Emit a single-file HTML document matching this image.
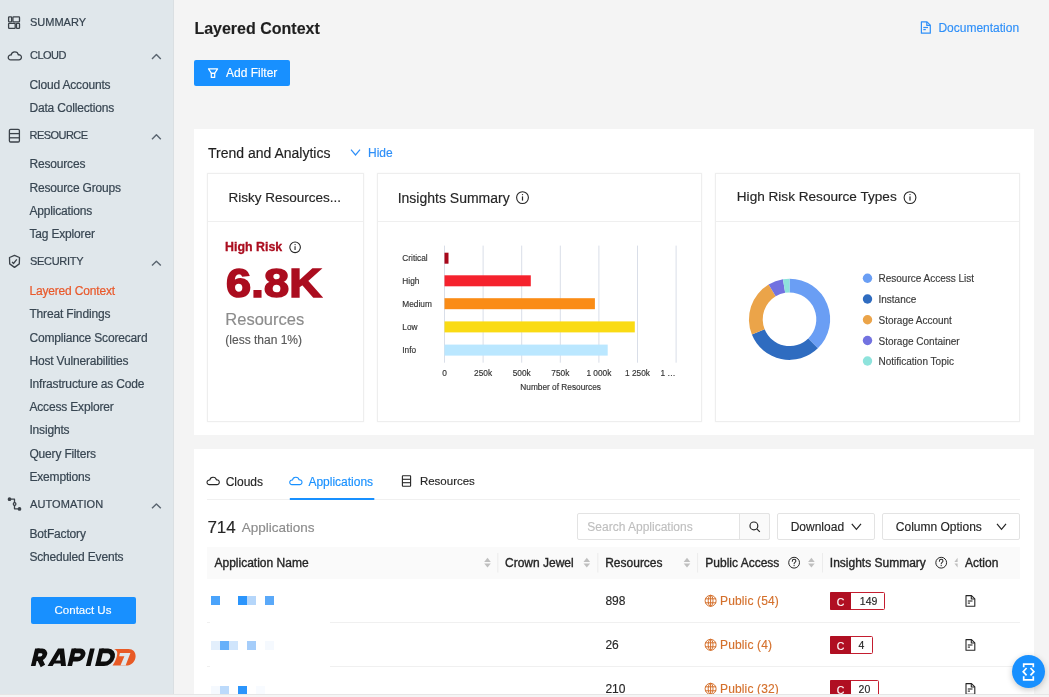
<!DOCTYPE html>
<html><head><meta charset="utf-8">
<style>
*{margin:0;padding:0;box-sizing:border-box}
html,body{width:1049px;height:697px;overflow:hidden;background:#f4f4f4;-webkit-font-smoothing:antialiased;font-family:"Liberation Sans",sans-serif;position:relative}
.a{position:absolute;white-space:nowrap}
.t{position:absolute;white-space:nowrap;line-height:1;-webkit-text-stroke:0.15px currentColor}
#side{position:absolute;left:0;top:0;width:174px;height:697px;background:#e0e7eb;border-right:1px solid #dadfe2}
#side .h{font-size:11px;color:#36434f;left:30px;-webkit-text-stroke:0.2px #36434f}
#side .i{font-size:12px;letter-spacing:-0.17px;color:#384652;left:29.4px;-webkit-text-stroke:0.2px #384652}
#side .act{color:#e9592b;-webkit-text-stroke:0.2px #e9592b}
svg{position:absolute;overflow:visible}
.card{position:absolute;background:#fff}
.ic{position:absolute;background:#fff;border:1px solid #eeeeee;box-shadow:0 0 1.5px rgba(0,0,0,0.06)}
.ich{position:absolute;left:0;right:0;top:0;height:48px;border-bottom:1px solid #efefef}
.hd{font-size:12px;color:#262626;-webkit-text-stroke:0.35px #262626}
.rw{font-size:12px;color:#262626}
.pub{font-size:12px;color:#d4702c;letter-spacing:0.15px}
.cb{font-size:10.5px;color:#fff;text-align:center}
.cn{font-size:10.5px;color:#262626}
</style></head>
<body><div style="position:absolute;left:0;top:0;width:1049px;height:697px;will-change:transform">
<div id="side">
  <!-- SUMMARY icon -->
  <svg style="left:0;top:0" width="174" height="697" viewBox="0 0 174 697">
    <g fill="none" stroke="#3b4249" stroke-width="1.3" stroke-linejoin="round">
      <rect x="8.6" y="16.9" width="3" height="5" rx="0.6"/>
      <rect x="12.9" y="16.9" width="6.6" height="5" rx="0.6"/>
      <rect x="8.6" y="23.3" width="6.6" height="5" rx="0.6"/>
      <rect x="16.5" y="23.3" width="3" height="5" rx="0.6"/>
      <!-- cloud -->
      <path d="M10.68 59.91 L18.88 59.91 A2.59 2.59 0 1 0 18.36 54.78 A3.67 3.67 0 0 0 11.16 54.99 A2.48 2.48 0 1 0 10.68 59.91 Z"/>
      <!-- resource -->
      <rect x="9.4" y="129.4" width="10" height="12.6" rx="1.2"/>
      <line x1="9.4" y1="133.6" x2="19.4" y2="133.6"/>
      <line x1="9.4" y1="137.8" x2="19.4" y2="137.8"/>
      <!-- shield -->
      <path d="M14.5 255.4 L19.5 257.5 L19.3 263.9 L14.5 267.4 L9.7 263.9 L9.5 257.5 Z"/>
      <path d="M12.1 261.9 L13.5 263.5 L16.8 259.3"/>
      <!-- automation -->
      <path d="M10.5 499.2 H14.5 V503 M14.5 505 V508.8 H18.5"/>
      <circle cx="14.6" cy="504" r="1.3"/>
      <circle cx="9.5" cy="499.2" r="1.2" fill="#3b4249"/>
      <circle cx="19.5" cy="508.9" r="1.2" fill="#3b4249"/>
      <!-- chevrons -->
      <path d="M152 59 L156.4 54.6 L160.8 59" stroke="#5a6570" stroke-width="1.4"/>
      <path d="M152 139.2 L156.4 134.8 L160.8 139.2" stroke="#5a6570" stroke-width="1.4"/>
      <path d="M152 265.6 L156.4 261.2 L160.8 265.6" stroke="#5a6570" stroke-width="1.4"/>
      <path d="M152 508.3 L156.4 503.9 L160.8 508.3" stroke="#5a6570" stroke-width="1.4"/>
    </g>
  </svg>
  <div class="t h" style="top:16.9px">SUMMARY</div>
  <div class="t h" style="top:49.7px;letter-spacing:-0.5px">CLOUD</div>
  <div class="t i" style="top:78.8px">Cloud Accounts</div>
  <div class="t i" style="top:102.0px">Data Collections</div>
  <div class="t h" style="top:129.9px;letter-spacing:-0.55px;left:29.6px">RESOURCE</div>
  <div class="t i" style="top:158.4px">Resources</div>
  <div class="t i" style="top:181.6px">Resource Groups</div>
  <div class="t i" style="top:204.8px">Applications</div>
  <div class="t i" style="top:228.0px">Tag Explorer</div>
  <div class="t h" style="top:256px;letter-spacing:-0.3px">SECURITY</div>
  <div class="t i act" style="top:285.1px">Layered Context</div>
  <div class="t i" style="top:308.4px">Threat Findings</div>
  <div class="t i" style="top:331.6px">Compliance Scorecard</div>
  <div class="t i" style="top:354.8px">Host Vulnerabilities</div>
  <div class="t i" style="top:378.0px">Infrastructure as Code</div>
  <div class="t i" style="top:401.2px">Access Explorer</div>
  <div class="t i" style="top:424.4px">Insights</div>
  <div class="t i" style="top:447.6px">Query Filters</div>
  <div class="t i" style="top:470.8px">Exemptions</div>
  <div class="t h" style="top:499.4px;letter-spacing:0.1px">AUTOMATION</div>
  <div class="t i" style="top:528.0px">BotFactory</div>
  <div class="t i" style="top:550.7px">Scheduled Events</div>
  <div class="a" style="left:30.5px;top:597.4px;width:105px;height:26.5px;background:#1890ff;border-radius:2px"></div>
  <div class="t" style="left:30.5px;width:105px;text-align:center;top:605px;font-size:11.5px;color:#fff">Contact Us</div>
  <!-- logo -->
  <svg style="left:0;top:0" width="174" height="697">
    <g transform="translate(0,666.0) skewX(-13.6) translate(0,-666.0)" fill="none" stroke="#0d0d0d" stroke-width="4.6" stroke-linecap="butt"><path d="M33.20 666.0 V648.6"/><path d="M33.20 650.90 H38.10 A3.90 3.90 0 0 1 38.10 658.70 H33.20"/><path d="M37.60 658.70 L42.90 666.0"/><path stroke="none" fill="#0d0d0d" d="M47.60 666.0 L53.80 648.6 L59.80 648.6 L66.00 666.0 L61.00 666.0 L56.80 654.10 L52.60 666.0 Z"/><path stroke="none" fill="#0d0d0d" d="M50.80 660.40 L62.80 660.40 L63.80 663.40 L49.80 663.40 Z"/><path d="M69.70 666.0 V648.6"/><path d="M69.70 650.90 H76.20 A4.1 4.1 0 0 1 76.20 659.10 H69.70"/><path d="M88.20 666.0 V648.6"/><path d="M97.40 666.0 V648.6"/><path d="M97.40 650.90 H104.00 A6.40 6.40 0 0 1 104.00 663.70 H97.40"/></g>
    <path fill-rule="evenodd" fill="#e85a25" d="M114 648.9 L128.5 648.9 C133 648.9 135.8 652 135.6 656.5 C135.4 661.5 131.5 665.6 125.9 665.6 L112.5 665.6 C115.5 661 117.6 656 117.2 652.2 C117 650.6 115.6 649.5 114 648.9 Z M119.9 653 L130.4 653 L125.5 665.8 L120.3 665.8 L124.4 656.3 L119.2 656.3 Z"/>
  </svg>
</div>

<!-- MAIN HEADER -->
<div class="t" style="left:194.4px;top:21px;font-size:16px;font-weight:bold;color:#1f1f1f">Layered Context</div>
<svg style="left:0;top:0" width="1049" height="697">
  <g fill="none" stroke="#2e8ff8" stroke-width="1.2" stroke-linejoin="round">
    <path d="M921.4 21.9 H927 L930.3 25.2 V33.2 H921.4 Z"/>
    <path d="M926.8 22 V25.4 H930.2"/>
    <line x1="923.3" y1="27.5" x2="928" y2="27.5"/>
    <line x1="923.3" y1="29.6" x2="925.8" y2="29.6"/>
  </g>
</svg>
<div class="t" style="left:938.4px;top:21.8px;font-size:12px;color:#2e8ff8">Documentation</div>
<div class="a" style="left:194px;top:60px;width:96px;height:26px;background:#1890ff;border-radius:2px"></div>
<svg style="left:0;top:0" width="1049" height="697">
  <g fill="none" stroke="#fff" stroke-width="1.2" stroke-linejoin="round">
    <path d="M208.5 68.8 H217.6 L214.6 73.4 H211.5 Z"/>
    <rect x="211.3" y="73.4" width="3.4" height="4"/>
  </g>
</svg>
<div class="t" style="left:226px;top:67.2px;font-size:12px;color:#fff">Add Filter</div>

<!-- TREND CARD -->
<div class="card" style="left:194px;top:129px;width:840px;height:306px"></div>
<div class="t" style="left:208px;top:146.1px;font-size:14px;color:#1f1f1f">Trend and Analytics</div>
<svg style="left:0;top:0" width="1049" height="697">
  <path d="M351 149.6 L355.5 155 L360 149.6" fill="none" stroke="#2e8ff8" stroke-width="1.2"/>
</svg>
<div class="t" style="left:368px;top:147.4px;font-size:12px;color:#2e8ff8">Hide</div>

<div class="ic" style="left:207px;top:173px;width:157px;height:249px"><div class="ich"></div></div>
<div class="ic" style="left:377px;top:173px;width:325px;height:249px"><div class="ich"></div></div>
<div class="ic" style="left:715px;top:173px;width:305px;height:249px"><div class="ich"></div></div>

<div class="t" style="left:228.4px;top:191.1px;font-size:13.5px;color:#262626">Risky Resources...</div>
<div class="t" style="left:397.7px;top:191.2px;font-size:14px;color:#262626">Insights Summary</div>
<div class="t" style="left:736.8px;top:190.4px;font-size:13.6px;color:#262626">High Risk Resource Types</div>
<svg style="left:0;top:0" width="1049" height="697">
  <g fill="none" stroke="#262626" stroke-width="1.1">
    <circle cx="522.5" cy="197.6" r="5.9"/>
    <circle cx="910" cy="197.6" r="5.9"/>
    <circle cx="295.1" cy="247.3" r="5.3"/>
  </g>
  <g fill="#262626">
    <rect x="521.9" y="196.4" width="1.2" height="4.2"/><circle cx="522.5" cy="194.6" r="0.7"/>
    <rect x="909.4" y="196.4" width="1.2" height="4.2"/><circle cx="910" cy="194.6" r="0.7"/>
    <rect x="294.5" y="246.2" width="1.1" height="3.8"/><circle cx="295.1" cy="244.6" r="0.65"/>
  </g>
</svg>
<div class="t" style="left:225.1px;top:241px;font-size:12.4px;font-weight:bold;color:#ab0d1f;-webkit-text-stroke:0.3px #ab0d1f">High Risk</div>
<div class="t" style="left:226px;top:263px;font-size:41px;font-weight:bold;color:#ab0d1f;letter-spacing:0.2px;-webkit-text-stroke:1.6px #ab0d1f;transform:scaleX(1.1);transform-origin:0 0">6.8K</div>
<div class="t" style="left:225.3px;top:311.3px;font-size:16.5px;color:#8c8c8c">Resources</div>
<div class="t" style="left:225.3px;top:333.5px;font-size:12px;color:#595959">(less than 1%)</div>


<!-- CHARTS -->
<svg style="left:0;top:0" width="1049" height="697">
  <g stroke="#d9dee8" stroke-width="1"><line x1="444.5" y1="245.6" x2="444.5" y2="362.7"/><line x1="483.1" y1="245.6" x2="483.1" y2="362.7"/><line x1="521.7" y1="245.6" x2="521.7" y2="362.7"/><line x1="560.3" y1="245.6" x2="560.3" y2="362.7"/><line x1="598.9" y1="245.6" x2="598.9" y2="362.7"/><line x1="637.5" y1="245.6" x2="637.5" y2="362.7"/><line x1="676.1" y1="245.6" x2="676.1" y2="362.7"/></g>
  
<rect x="444.5" y="252.7" width="4" height="11" fill="#a8071a"/>
<rect x="444.5" y="275.3" width="86.3" height="11" fill="#f5222d"/>
<rect x="444.5" y="298.2" width="150.4" height="11" fill="#fa8c16"/>
<rect x="444.5" y="321.4" width="190.3" height="11" fill="#fadb14"/>
<rect x="444.5" y="344.6" width="163.2" height="11" fill="#bae7ff"/>

  <path d="M789.50 278.70 A40.6 40.6 0 0 1 817.86 348.36 L808.22 338.48 A26.8 26.8 0 0 0 789.50 292.50 Z" fill="#6a9ef4"/><path d="M817.86 348.36 A40.6 40.6 0 0 1 751.86 334.51 L764.65 329.34 A26.8 26.8 0 0 0 808.22 338.48 Z" fill="#2f6cc0"/><path d="M751.86 334.51 A40.6 40.6 0 0 1 768.59 284.50 L775.70 296.33 A26.8 26.8 0 0 0 764.65 329.34 Z" fill="#eba449"/><path d="M768.59 284.50 A40.6 40.6 0 0 1 782.94 279.23 L785.17 292.85 A26.8 26.8 0 0 0 775.70 296.33 Z" fill="#7272e0"/><path d="M782.94 279.23 A40.6 40.6 0 0 1 789.50 278.70 L789.50 292.50 A26.8 26.8 0 0 0 785.17 292.85 Z" fill="#8ee3dc"/>
  <circle cx="867.5" cy="278.2" r="4.7" fill="#6a9ef4"/><circle cx="867.5" cy="299" r="4.7" fill="#2f6cc0"/><circle cx="867.5" cy="319.8" r="4.7" fill="#eba449"/><circle cx="867.5" cy="340.5" r="4.7" fill="#7272e0"/><circle cx="867.5" cy="361" r="4.7" fill="#8ee3dc"/>
</svg>
<div class="t" style="left:402.3px;top:254.3px;font-size:8.3px;color:#333">Critical</div><div class="t" style="left:402.3px;top:276.8px;font-size:8.3px;color:#333">High</div><div class="t" style="left:402.3px;top:299.8px;font-size:8.3px;color:#333">Medium</div><div class="t" style="left:402.3px;top:322.8px;font-size:8.3px;color:#333">Low</div><div class="t" style="left:402.3px;top:346.0px;font-size:8.3px;color:#333">Info</div>
<div class="t" style="left:404.5px;width:80px;text-align:center;top:369px;font-size:8.3px;color:#333">0</div><div class="t" style="left:443.1px;width:80px;text-align:center;top:369px;font-size:8.3px;color:#333">250k</div><div class="t" style="left:481.70000000000005px;width:80px;text-align:center;top:369px;font-size:8.3px;color:#333">500k</div><div class="t" style="left:520.3px;width:80px;text-align:center;top:369px;font-size:8.3px;color:#333">750k</div><div class="t" style="left:558.9px;width:80px;text-align:center;top:369px;font-size:8.3px;color:#333">1 000k</div><div class="t" style="left:597.5px;width:80px;text-align:center;top:369px;font-size:8.3px;color:#333">1 250k</div><div class="t" style="left:628px;width:80px;text-align:center;top:369px;font-size:8.3px;color:#333">1 …</div>
<div class="t" style="left:520.3px;top:383.3px;font-size:8.3px;color:#333">Number of Resources</div>
<div class="t" style="left:878.5px;top:274.2px;font-size:10px;color:#3a3a3a">Resource Access List</div><div class="t" style="left:878.5px;top:295.0px;font-size:10px;color:#3a3a3a">Instance</div><div class="t" style="left:878.5px;top:315.8px;font-size:10px;color:#3a3a3a">Storage Account</div><div class="t" style="left:878.5px;top:336.5px;font-size:10px;color:#3a3a3a">Storage Container</div><div class="t" style="left:878.5px;top:357.0px;font-size:10px;color:#3a3a3a">Notification Topic</div>


<!-- TABLE CARD -->
<div class="card" style="left:194px;top:449px;width:840px;height:245px"></div>
<svg style="left:0;top:0" width="1049" height="697">
  <g fill="none" stroke-width="1.1" stroke-linejoin="round">
    <path stroke="#262626" d="M209.30 484.60 L216.90 484.60 A2.40 2.40 0 1 0 216.42 479.85 A3.40 3.40 0 0 0 209.75 480.04 A2.30 2.30 0 1 0 209.30 484.60 Z"/>
    <path stroke="#1890ff" d="M292.00 484.60 L299.60 484.60 A2.40 2.40 0 1 0 299.12 479.85 A3.40 3.40 0 0 0 292.45 480.04 A2.30 2.30 0 1 0 292.00 484.60 Z"/>
    <g stroke="#262626">
      <rect x="402.4" y="475.8" width="8.2" height="10.4" rx="0.5"/>
      <line x1="402.4" y1="479.3" x2="410.6" y2="479.3"/>
      <line x1="402.4" y1="482.7" x2="410.6" y2="482.7"/>
    </g>
  </g>
  <line x1="207" y1="499.5" x2="1020" y2="499.5" stroke="#f0f0f0" stroke-width="1"/>
  <rect x="289.8" y="498" width="84.5" height="2" fill="#1890ff"/>
</svg>
<div class="t" style="left:225.7px;top:475.6px;font-size:12px;color:#262626">Clouds</div>
<div class="t" style="left:308.4px;top:475.6px;font-size:12px;color:#1890ff">Applications</div>
<div class="t" style="left:419.9px;top:475.6px;font-size:11.5px;color:#262626">Resources</div>

<div class="t" style="left:207.4px;top:519.4px;font-size:17px;color:#262626">714</div>
<div class="t" style="left:241.8px;top:520.7px;font-size:13.5px;color:#8c8c8c">Applications</div>

<div class="a" style="left:577px;top:513px;width:193px;height:27px;border:1px solid #e3e3e3;border-radius:2px;background:#fff"></div>
<div class="a" style="left:739px;top:513px;width:31px;height:27px;border:1px solid #e3e3e3;border-radius:0 2px 2px 0;background:#fafafa"></div>
<svg style="left:0;top:0" width="1049" height="697">
  <g fill="none" stroke="#262626" stroke-width="1.2"><circle cx="753.9" cy="525.9" r="3.9"/><line x1="756.8" y1="528.8" x2="759.8" y2="531.8"/></g>
</svg>
<div class="t" style="left:587.3px;top:521px;font-size:12px;color:#bfbfbf">Search Applications</div>

<div class="a" style="left:777px;top:513px;width:98px;height:27px;border:1px solid #e3e3e3;border-radius:2px;background:#fff"></div>
<div class="t" style="left:790.7px;top:521px;font-size:12px;color:#262626">Download</div>
<div class="a" style="left:882px;top:513px;width:138px;height:27px;border:1px solid #e3e3e3;border-radius:2px;background:#fff"></div>
<div class="t" style="left:895.8px;top:521px;font-size:12px;color:#262626">Column Options</div>
<svg style="left:0;top:0" width="1049" height="697">
  <g fill="none" stroke="#262626" stroke-width="1.2"><path d="M851.8 523.8 L856.4 529.4 L861 523.8"/><path d="M997 523.8 L1001.5 529.4 L1006 523.8"/></g>
</svg>

<!-- table header -->
<div class="a" style="left:207px;top:547px;width:813px;height:32px;background:#fafafa"></div>
<svg style="left:0;top:0" width="1049" height="697">
  <g stroke="#ececec" stroke-width="1">
    <line x1="497.8" y1="553" x2="497.8" y2="572.5"/>
    <line x1="597.8" y1="553" x2="597.8" y2="572.5"/>
    <line x1="697.6" y1="553" x2="697.6" y2="572.5"/>
    <line x1="822.5" y1="553" x2="822.5" y2="572.5"/>
  </g>
  <g fill="#bfbfbf"><path d="M484.2 562 L487.5 557.8 L490.8 562 Z"/><path d="M484.2 563.4 L487.5 567.6 L490.8 563.4 Z"/><path d="M583.5 562 L586.8 557.8 L590.1 562 Z"/><path d="M583.5 563.4 L586.8 567.6 L590.1 563.4 Z"/><path d="M683.7 562 L687.0 557.8 L690.3 562 Z"/><path d="M683.7 563.4 L687.0 567.6 L690.3 563.4 Z"/><path d="M808.1 562 L811.4 557.8 L814.7 562 Z"/><path d="M808.1 563.4 L811.4 567.6 L814.7 563.4 Z"/><path d="M954.4 562 L957.6 557.8 L957.6 562 Z"/><path d="M954.4 563.4 L957.6 567.6 L957.6 563.4 Z"/></g>
  <g fill="none" stroke="#262626" stroke-width="1">
    <circle cx="794.1" cy="562.7" r="5.4"/>
    <circle cx="941.2" cy="562.7" r="5.4"/>
  </g>
  <g fill="none" stroke="#262626" stroke-width="1.05" stroke-linecap="round">
    <path d="M792.3 561.2 C792.3 559.9 793.2 559.3 794.1 559.3 C795.1 559.3 795.9 560 795.9 561 C795.9 562.2 794.1 562.4 794.1 563.7"/>
    <path d="M939.4 561.2 C939.4 559.9 940.3 559.3 941.2 559.3 C942.2 559.3 943 560 943 561 C943 562.2 941.2 562.4 941.2 563.7"/>
  </g>
  <g fill="#262626"><circle cx="794.1" cy="565.6" r="0.65"/><circle cx="941.2" cy="565.6" r="0.65"/></g>
</svg>
<div class="t hd" style="left:214.5px;top:557.4px">Application Name</div>
<div class="t hd" style="left:505px;top:557.4px">Crown Jewel</div>
<div class="t hd" style="left:605.2px;top:557.4px">Resources</div>
<div class="t hd" style="left:705.3px;top:557.4px">Public Access</div>
<div class="t hd" style="left:829.8px;top:557.4px">Insights Summary</div>
<div class="t hd" style="left:965px;top:557.4px">Action</div>

<!-- rows -->
<svg style="left:0;top:0" width="1049" height="697">
  <g stroke="#f0f0f0" stroke-width="1">
    <line x1="207" y1="622.5" x2="210" y2="622.5"/><line x1="330" y1="622.5" x2="1020" y2="622.5"/>
    <line x1="207" y1="666.5" x2="210" y2="666.5"/><line x1="330" y1="666.5" x2="1020" y2="666.5"/>
  </g>
  <!-- redaction blocks -->
  <rect x="211" y="596" width="9" height="9" fill="#4aa3fb"/>
  <rect x="238" y="596" width="9" height="9" fill="#2b95fc"/>
  <rect x="247" y="596" width="9" height="9" fill="#b5d6fa"/>
  <rect x="265" y="596" width="9" height="9" fill="#5aa9f9"/>
  <rect x="211" y="641" width="9" height="9" fill="#e3effc"/>
  <rect x="220" y="641" width="9" height="9" fill="#66b0fa"/>
  <rect x="229" y="641" width="9" height="9" fill="#d0e5fc"/>
  <rect x="247" y="641" width="9" height="9" fill="#a5cdfa"/>
  <rect x="265" y="641" width="9" height="9" fill="#f5f9fe"/>
  <rect x="211" y="686" width="9" height="9" fill="#f5f9fe"/>
  <rect x="220" y="686" width="9" height="9" fill="#bcdafb"/>
  <rect x="238" y="686" width="9" height="9" fill="#2b95fc"/>
  <rect x="256" y="686" width="9" height="9" fill="#f8fbff"/>
  <!-- globes -->
  <g fill="none" stroke="#d4702c" stroke-width="1" transform="translate(0,0.5)">
    <g id="gl1"><circle cx="710.6" cy="600.3" r="5.5"/><ellipse cx="710.6" cy="600.3" rx="2.4" ry="5.5"/><line x1="705.1" y1="598.3" x2="716.1" y2="598.3"/><line x1="705.1" y1="602.3" x2="716.1" y2="602.3"/><line x1="710.6" y1="594.8" x2="710.6" y2="605.8"/></g>
    <g transform="translate(0,44)"><circle cx="710.6" cy="600.3" r="5.5"/><ellipse cx="710.6" cy="600.3" rx="2.4" ry="5.5"/><line x1="705.1" y1="598.3" x2="716.1" y2="598.3"/><line x1="705.1" y1="602.3" x2="716.1" y2="602.3"/><line x1="710.6" y1="594.8" x2="710.6" y2="605.8"/></g>
    <g transform="translate(0,88)"><circle cx="710.6" cy="600.3" r="5.5"/><ellipse cx="710.6" cy="600.3" rx="2.4" ry="5.5"/><line x1="705.1" y1="598.3" x2="716.1" y2="598.3"/><line x1="705.1" y1="602.3" x2="716.1" y2="602.3"/><line x1="710.6" y1="594.8" x2="710.6" y2="605.8"/></g>
  </g>
  <!-- badges -->
  <g>
    <rect x="830.5" y="592.5" width="54" height="17" fill="#fff" stroke="#c41d2f" stroke-width="1" rx="1"/>
    <rect x="830" y="592" width="21" height="18" fill="#b00f22" rx="1"/>
    <rect x="830.5" y="636.5" width="42" height="17" fill="#fff" stroke="#c41d2f" stroke-width="1" rx="1"/>
    <rect x="830" y="636" width="21" height="18" fill="#b00f22" rx="1"/>
    <rect x="830.5" y="680.5" width="48" height="17" fill="#fff" stroke="#c41d2f" stroke-width="1" rx="1"/>
    <rect x="830" y="680" width="21" height="18" fill="#b00f22" rx="1"/>
  </g>
  <!-- doc icons -->
  <g fill="none" stroke="#262626" stroke-width="1.1" stroke-linejoin="round">
    <g><path d="M966 595.6 H971.5 L974.8 598.9 V606.2 H966 Z"/><path d="M971.3 595.7 V599 H974.7"/><line x1="967.8" y1="601" x2="972.5" y2="601"/><line x1="967.8" y1="603.1" x2="970" y2="603.1"/></g>
    <g transform="translate(0,44)"><path d="M966 595.6 H971.5 L974.8 598.9 V606.2 H966 Z"/><path d="M971.3 595.7 V599 H974.7"/><line x1="967.8" y1="601" x2="972.5" y2="601"/><line x1="967.8" y1="603.1" x2="970" y2="603.1"/></g>
    <g transform="translate(0,88)"><path d="M966 595.6 H971.5 L974.8 598.9 V606.2 H966 Z"/><path d="M971.3 595.7 V599 H974.7"/><line x1="967.8" y1="601" x2="972.5" y2="601"/><line x1="967.8" y1="603.1" x2="970" y2="603.1"/></g>
  </g>
</svg>
<div class="t rw" style="left:605.4px;top:594.8px">898</div>
<div class="t rw" style="left:605.4px;top:638.8px">26</div>
<div class="t rw" style="left:605.4px;top:682.8px">210</div>
<div class="t pub" style="left:720px;top:594.8px">Public (54)</div>
<div class="t pub" style="left:720px;top:638.8px">Public (4)</div>
<div class="t pub" style="left:720px;top:682.8px">Public (32)</div>
<div class="t cb" style="left:830px;width:21px;top:597px">C</div>
<div class="t cb" style="left:830px;width:21px;top:641px">C</div>
<div class="t cb" style="left:830px;width:21px;top:685px">C</div>
<div class="t cn" style="left:859.8px;top:596.4px">149</div>
<div class="t cn" style="left:858.6px;top:640.4px">4</div>
<div class="t cn" style="left:858.6px;top:684.4px">20</div>

<!-- floating button -->
<div class="a" style="left:1011.9px;top:654.5px;width:33.5px;height:33.5px;border-radius:50%;background:#1890ff;box-shadow:0 2px 6px rgba(0,0,0,0.22)"></div>
<svg style="left:0;top:0" width="1049" height="697">
  <g fill="none" stroke="#fff" stroke-width="1.7" stroke-linejoin="miter" stroke-linecap="butt">
    <path d="M1023.7 667.3 V664.1 H1033.3 V667.3"/>
    <path d="M1023.7 676.2 V679.9 H1033.3 V676.2"/>
    <path d="M1026.6 668 L1023.2 671.7 L1026.6 675.3"/>
    <path d="M1030.5 668 L1033.9 671.7 L1030.5 675.3"/>
  </g>
</svg>

<div class="a" style="left:0;top:694px;width:1049px;height:3px;background:#f5f5f5;border-top:1px solid #e6e6e6"></div>
</div></body></html>
